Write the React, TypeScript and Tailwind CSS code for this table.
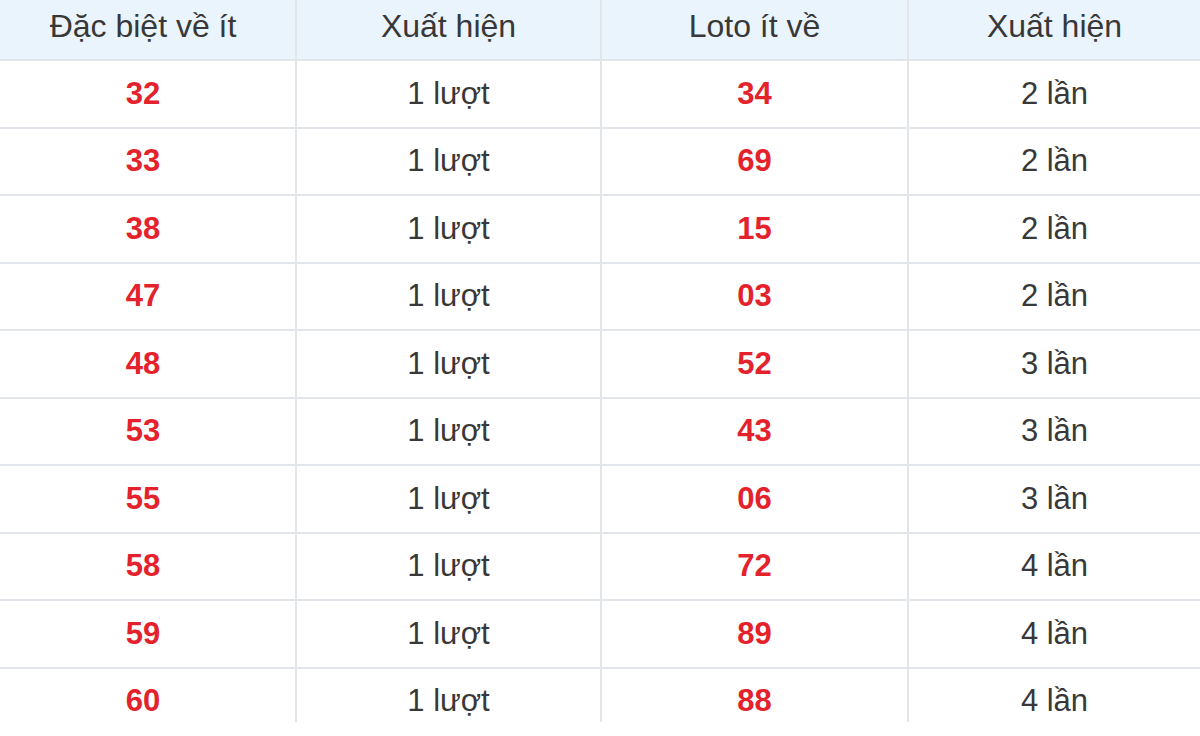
const rows = [
  ["32", "1 lượt", "34", "2 lần"],
  ["33", "1 lượt", "69", "2 lần"],
  ["38", "1 lượt", "15", "2 lần"],
  ["47", "1 lượt", "03", "2 lần"],
  ["48", "1 lượt", "52", "3 lần"],
  ["53", "1 lượt", "43", "3 lần"],
  ["55", "1 lượt", "06", "3 lần"],
  ["58", "1 lượt", "72", "4 lần"],
  ["59", "1 lượt", "89", "4 lần"],
  ["60", "1 lượt", "88", "4 lần"],
];

const headers = ["Đặc biệt về ít", "Xuất hiện", "Loto ít về", "Xuất hiện"];

export default function App() {
  return (
    <div
      className="w-[1200px] h-[736px] bg-white overflow-hidden"
      style={{ fontFamily: '"Liberation Sans", Arial, sans-serif' }}
    >
      <div className="h-[722px] overflow-hidden">
        <div className="grid grid-cols-[297px_305px_307px_1fr] h-[61px] bg-[#eaf4fd] border-b-2 border-[#e2e5e9]">
          {headers.map((h, i) => (
            <div
              key={i}
              className={
                "flex items-center justify-center pb-2 text-[32px] text-[#383838] " +
                (i < 3 ? "border-r-2 border-[#e2e5e9] " : "") +
                (i === 0 ? "pr-[9px]" : "")
              }
            >
              {h}
            </div>
          ))}
        </div>
        {rows.map((r, ri) => (
          <div
            key={ri}
            className="grid grid-cols-[297px_305px_307px_1fr] h-[67.5px] border-b-2 border-[#e2e5e9]"
          >
            <div className="flex items-center justify-center pr-[9px] border-r-2 border-[#e2e5e9] text-[31px] font-bold text-[#e3222c]">
              {r[0]}
            </div>
            <div className="flex items-center justify-center border-r-2 border-[#e2e5e9] text-[31px] text-[#383838]">
              {r[1]}
            </div>
            <div className="flex items-center justify-center border-r-2 border-[#e2e5e9] text-[31px] font-bold text-[#e3222c]">
              {r[2]}
            </div>
            <div className="flex items-center justify-center text-[31px] text-[#383838]">
              {r[3]}
            </div>
          </div>
        ))}
      </div>
    </div>
  );
}
